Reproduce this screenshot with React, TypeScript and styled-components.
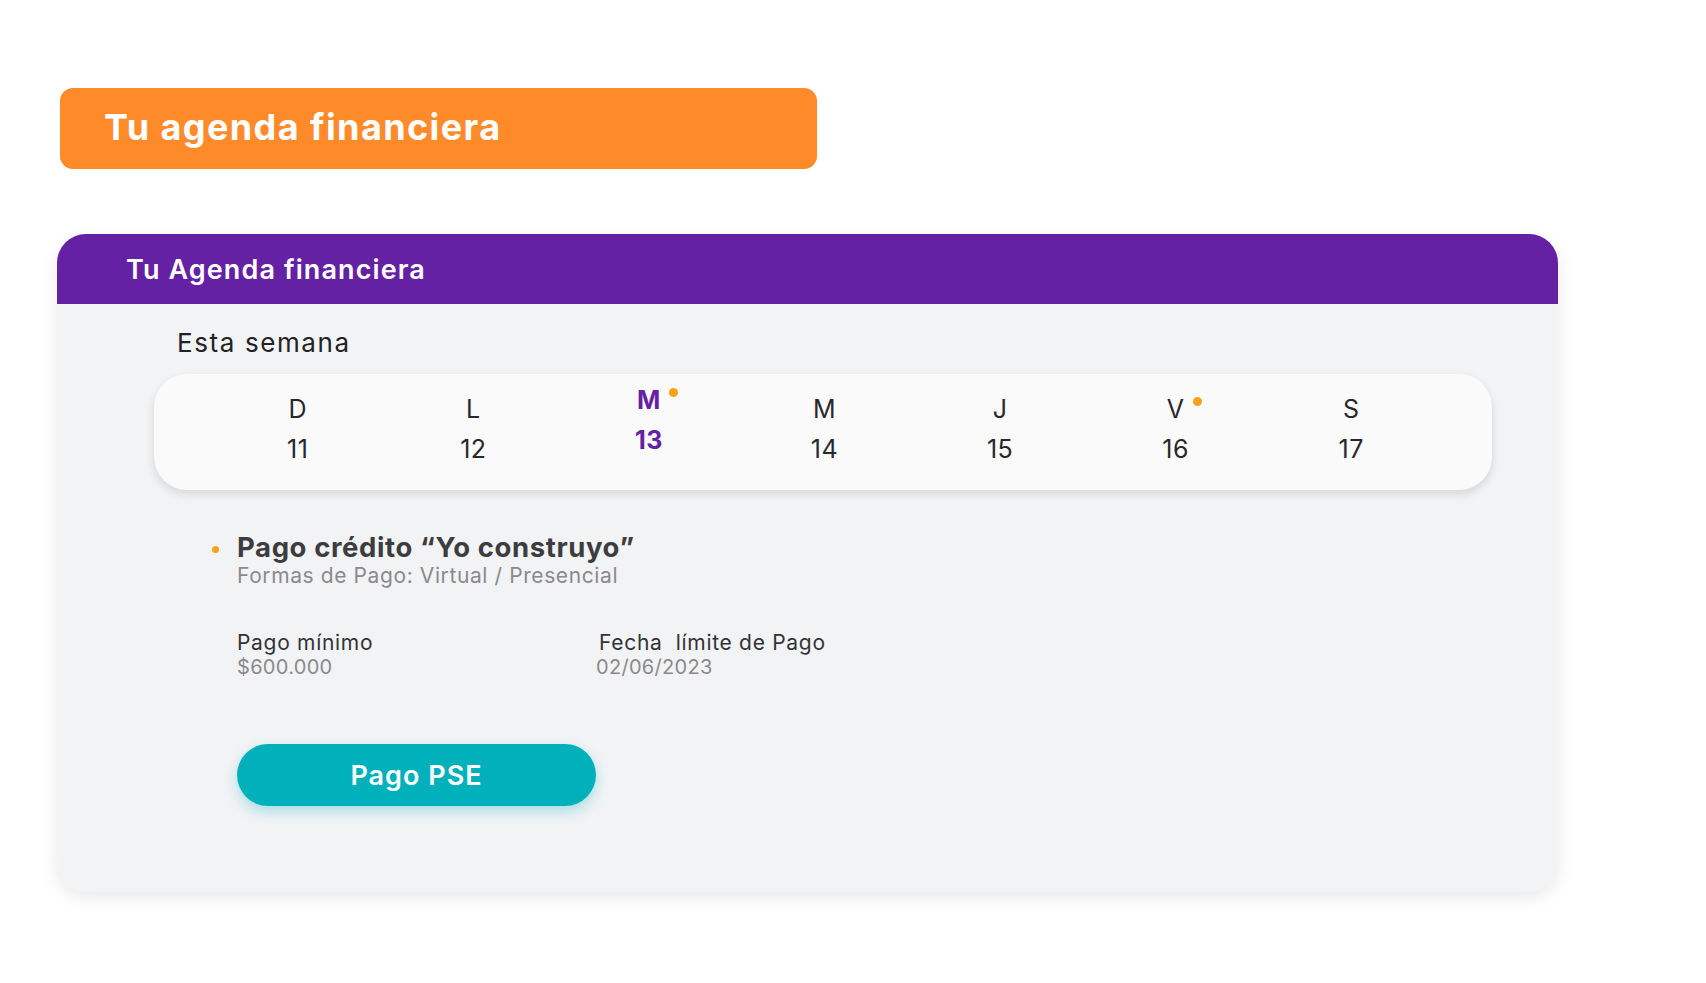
import styled, { createGlobalStyle } from "styled-components";

const GlobalStyle = createGlobalStyle`
    body {
        margin: 0;
        background: #ffffff;
        font-family: Inter, "Open Sans", sans-serif;
    }
`;

const Page = styled.div`
    padding: 88px 0 60px 57px;
`;

const Banner = styled.div`
    margin-left: 3px;
    width: 757px;
    height: 81px;
    box-sizing: border-box;
    padding-left: 44px;
    padding-bottom: 3px;
    display: flex;
    align-items: center;
    background: #ff8a29;
    border-radius: 13px;
    color: #ffffff;
    font-size: 36px;
    font-weight: 700;
    letter-spacing: 1.4px;
`;

const Card = styled.section`
    margin-top: 65px;
    width: 1501px;
    height: 658px;
    background: #f2f3f5;
    border-radius: 29px;
    overflow: hidden;
    box-shadow: 0 6px 18px rgba(0, 0, 0, 0.09);
`;

const CardHeader = styled.header`
    height: 70px;
    background: #6421a4;
    display: flex;
    align-items: center;
    padding-left: 69px;
    color: #ffffff;
    font-size: 27px;
    font-weight: 600;
    letter-spacing: 1.1px;
`;

const CardBody = styled.div`
    padding: 23px 0 0 97px;
`;

const WeekLabel = styled.h2`
    margin: 0 0 0 23px;
    font-size: 26px;
    line-height: 32px;
    font-weight: 400;
    letter-spacing: 1.6px;
    color: #222226;
`;

const WeekStrip = styled.div`
    margin-top: 15px;
    width: 1338px;
    height: 116px;
    box-sizing: border-box;
    padding: 0 53px 0 56px;
    background: #fafafa;
    border-radius: 33px;
    box-shadow: 0 4px 10px rgba(0, 0, 0, 0.12);
    display: grid;
    grid-template-columns: repeat(7, 1fr);
`;

const Day = styled.div<{ $active?: boolean }>`
    display: flex;
    flex-direction: column;
    align-items: center;
    padding-top: ${(p) => (p.$active ? "10px" : "19px")};
    color: ${(p) => (p.$active ? "#6421a4" : "#28282c")};
    font-weight: ${(p) => (p.$active ? 700 : 400)};
    font-size: 25px;
    letter-spacing: 0.5px;
`;

const Letter = styled.span`
    position: relative;
    line-height: 32px;
`;

const Num = styled.span`
    margin-top: 8px;
    line-height: 32px;
`;

const Dot = styled.span`
    position: absolute;
    top: 4px;
    right: -17px;
    width: 9px;
    height: 9px;
    border-radius: 50%;
    background: #f7a21b;
`;

const Event = styled.div`
    margin: 41px 0 0 83px;
    display: flex;
    flex-direction: column;
`;

const EventTitle = styled.h3`
    position: relative;
    margin: 0;
    font-size: 27.5px;
    line-height: 32px;
    font-weight: 700;
    letter-spacing: 0.6px;
    color: #3d3d3f;

    &::before {
        content: "";
        position: absolute;
        left: -25px;
        top: 15px;
        width: 7px;
        height: 7px;
        border-radius: 50%;
        background: #f7a21b;
    }
`;

const EventSub = styled.p`
    margin: 0;
    font-size: 21px;
    line-height: 26px;
    letter-spacing: 0.6px;
    color: #8a8a8d;
`;

const Details = styled.div`
    margin-top: 42px;
    display: grid;
    grid-template-columns: 359px auto;
`;

const Detail = styled.div`
    display: flex;
    flex-direction: column;
`;

const DetailLabel = styled.span<{ $shift?: number }>`
    font-size: 21px;
    line-height: 24px;
    letter-spacing: 0.7px;
    color: #333336;
    margin-left: ${(p) => p.$shift ?? 0}px;
`;

const DetailValue = styled.span`
    font-size: 20px;
    line-height: 24px;
    letter-spacing: 0.3px;
    color: #8a8a8d;
`;

const PayButton = styled.button`
    margin-top: 65px;
    width: 359px;
    height: 62px;
    border: none;
    border-radius: 31px;
    background: #00b1bc;
    color: #ffffff;
    font-family: inherit;
    font-size: 27px;
    font-weight: 600;
    letter-spacing: 1px;
    box-shadow: 0 6px 14px rgba(0, 177, 188, 0.3);
    cursor: pointer;
`;

const days = [
    { l: "D", n: 11 },
    { l: "L", n: 12 },
    { l: "M", n: 13, active: true, dot: true },
    { l: "M", n: 14 },
    { l: "J", n: 15 },
    { l: "V", n: 16, dot: true },
    { l: "S", n: 17 },
];

export default function App() {
    return (
        <>
            <GlobalStyle />
            <Page>
                <Banner>Tu agenda financiera</Banner>
                <Card>
                    <CardHeader>Tu Agenda financiera</CardHeader>
                    <CardBody>
                        <WeekLabel>Esta semana</WeekLabel>
                        <WeekStrip>
                            {days.map((d) => (
                                <Day key={d.n} $active={d.active}>
                                    <Letter>
                                        {d.l}
                                        {d.dot && <Dot />}
                                    </Letter>
                                    <Num>{d.n}</Num>
                                </Day>
                            ))}
                        </WeekStrip>
                        <Event>
                            <EventTitle>Pago crédito “Yo construyo”</EventTitle>
                            <EventSub>Formas de Pago: Virtual / Presencial</EventSub>
                            <Details>
                                <Detail>
                                    <DetailLabel>Pago mínimo</DetailLabel>
                                    <DetailValue>$600.000</DetailValue>
                                </Detail>
                                <Detail>
                                    <DetailLabel $shift={3}>Fecha&nbsp; límite de Pago</DetailLabel>
                                    <DetailValue>02/06/2023</DetailValue>
                                </Detail>
                            </Details>
                            <PayButton>Pago PSE</PayButton>
                        </Event>
                    </CardBody>
                </Card>
            </Page>
        </>
    );
}
